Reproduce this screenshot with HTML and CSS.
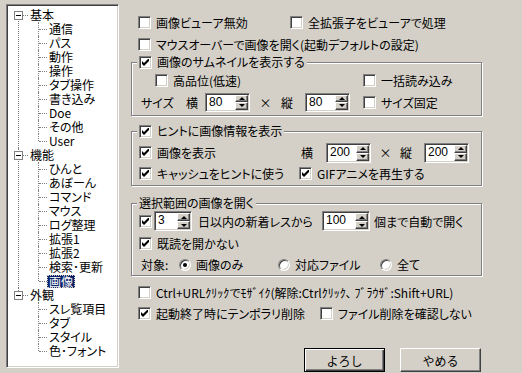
FILE: index.html
```html
<!DOCTYPE html>
<html lang="ja">
<head>
  <meta charset="UTF-8">
  <title>設定 - 画像</title>
  <link rel="stylesheet" href="styles.css">
</head>
<body>

  <div class="dialog">

    <!-- left: category tree -->
    <div class="tree">
      <ul class="root">
        <li class="node">
          <div class="head"><span class="toggle"></span><span class="label">基本</span></div>
          <ul class="kids">
            <li><span class="label">通信</span></li>
            <li><span class="label">パス</span></li>
            <li><span class="label">動作</span></li>
            <li><span class="label">操作</span></li>
            <li><span class="label">タブ操作</span></li>
            <li><span class="label">書き込み</span></li>
            <li><span class="label">Doe</span></li>
            <li><span class="label">その他</span></li>
            <li><span class="label">User</span></li>
          </ul>
        </li>
        <li class="node">
          <div class="head"><span class="toggle"></span><span class="label">機能</span></div>
          <ul class="kids">
            <li><span class="label">ひんと</span></li>
            <li><span class="label">あぼーん</span></li>
            <li><span class="label">コマンド</span></li>
            <li><span class="label">マウス</span></li>
            <li><span class="label">ログ整理</span></li>
            <li><span class="label">拡張1</span></li>
            <li><span class="label">拡張2</span></li>
            <li><span class="label">検索･更新</span></li>
            <li><span class="label selected">画像</span></li>
          </ul>
        </li>
        <li class="node">
          <div class="head"><span class="toggle"></span><span class="label">外観</span></div>
          <ul class="kids">
            <li><span class="label">スレ覧項目</span></li>
            <li><span class="label">タブ</span></li>
            <li><span class="label">スタイル</span></li>
            <li><span class="label">色･フォント</span></li>
          </ul>
        </li>
      </ul>
    </div>

    <!-- right: image settings page -->
    <div class="panel">

      <div class="line">
        <label class="chk viewer-off"><span class="cb"></span><span class="txt">画像ビューア無効</span></label>
        <label class="chk"><span class="cb"></span><span class="txt">全拡張子をビューアで処理</span></label>
      </div>
      <div class="line">
        <label class="chk"><span class="cb"></span><span class="txt">マウスオーバーで画像を開く(起動デフォルトの設定)</span></label>
      </div>

      <div class="group thumb">
        <label class="chk caption"><span class="cb"><svg viewBox="0 0 7 7" width="7" height="7"><path d="M0 2L2 4L7 -1V2L2 7L0 5Z"/></svg></span><span class="txt">画像のサムネイルを表示する</span></label>
        <div class="g-row">
          <label class="chk hq"><span class="cb"></span><span class="txt">高品位(低速)</span></label>
          <label class="chk"><span class="cb"></span><span class="txt">一括読み込み</span></label>
        </div>
        <div class="g-row">
          <span class="size-lbl">サイズ</span>
          <span class="axis-w">横</span>
          <span class="spin"><span class="val">80</span><span class="arrows"><span class="up"></span><span class="dn"></span></span></span>
          <span class="times">×</span>
          <span class="axis-h">縦</span>
          <span class="spin"><span class="val">80</span><span class="arrows"><span class="up"></span><span class="dn"></span></span></span>
          <label class="chk size-fix"><span class="cb"></span><span class="txt">サイズ固定</span></label>
        </div>
      </div>

      <div class="group hint">
        <label class="chk caption"><span class="cb"><svg viewBox="0 0 7 7" width="7" height="7"><path d="M0 2L2 4L7 -1V2L2 7L0 5Z"/></svg></span><span class="txt">ヒントに画像情報を表示</span></label>
        <div class="g-row">
          <label class="chk show-img"><span class="cb"><svg viewBox="0 0 7 7" width="7" height="7"><path d="M0 2L2 4L7 -1V2L2 7L0 5Z"/></svg></span><span class="txt">画像を表示</span></label>
          <span class="axis-w2">横</span>
          <span class="spin narrow"><span class="val">200</span><span class="arrows"><span class="up"></span><span class="dn"></span></span></span>
          <span class="times2">×</span>
          <span class="axis-h">縦</span>
          <span class="spin narrow"><span class="val">200</span><span class="arrows"><span class="up"></span><span class="dn"></span></span></span>
        </div>
        <div class="g-row">
          <label class="chk use-cache"><span class="cb"><svg viewBox="0 0 7 7" width="7" height="7"><path d="M0 2L2 4L7 -1V2L2 7L0 5Z"/></svg></span><span class="txt">キャッシュをヒントに使う</span></label>
          <label class="chk"><span class="cb"><svg viewBox="0 0 7 7" width="7" height="7"><path d="M0 2L2 4L7 -1V2L2 7L0 5Z"/></svg></span><span class="txt">GIFアニメを再生する</span></label>
        </div>
      </div>

      <div class="group range">
        <span class="caption plain">選択範囲の画像を開く</span>
        <div class="g-row">
          <span class="cb"><svg viewBox="0 0 7 7" width="7" height="7"><path d="M0 2L2 4L7 -1V2L2 7L0 5Z"/></svg></span>
          <span class="spin days"><span class="val">3</span><span class="arrows"><span class="up"></span><span class="dn"></span></span></span>
          <span class="days-lbl">日以内の新着レスから</span>
          <span class="spin count"><span class="val">100</span><span class="arrows"><span class="up"></span><span class="dn"></span></span></span>
          <span class="count-lbl">個まで自動で開く</span>
        </div>
        <div class="g-row">
          <label class="chk"><span class="cb"><svg viewBox="0 0 7 7" width="7" height="7"><path d="M0 2L2 4L7 -1V2L2 7L0 5Z"/></svg></span><span class="txt">既読を開かない</span></label>
        </div>
        <div class="g-row short">
          <span class="target-lbl">対象:</span>
          <label class="opt opt-img"><span class="radio on"></span><span class="txt">画像のみ</span></label>
          <label class="opt opt-file"><span class="radio"></span><span class="txt">対応ファイル</span></label>
          <label class="opt"><span class="radio"></span><span class="txt">全て</span></label>
        </div>
      </div>

      <div class="line short mosaic">
        <label class="chk"><span class="cb"></span><span class="txt">Ctrl+URLｸﾘｯｸでﾓｻﾞｲｸ(解除:Ctrlｸﾘｯｸ､ ﾌﾞﾗｳｻﾞ:Shift+URL)</span></label>
      </div>
      <div class="line short">
        <label class="chk temp-del"><span class="cb"><svg viewBox="0 0 7 7" width="7" height="7"><path d="M0 2L2 4L7 -1V2L2 7L0 5Z"/></svg></span><span class="txt">起動終了時にテンポラリ削除</span></label>
        <label class="chk"><span class="cb"></span><span class="txt">ファイル削除を確認しない</span></label>
      </div>

      <div class="button-row">
        <button class="btn default">よろし</button>
        <button class="btn">やめる</button>
      </div>

    </div>
  </div>

</body>
</html>
```

FILE: styles.css
```css
* {
  box-sizing: border-box;
}

body {
  margin: 0;
  width: 522px;
  height: 373px;
  overflow: hidden;
  background: #d4d0c8;
  color: #000;
  font-family: "Noto Sans CJK JP", "Liberation Sans", sans-serif;
  font-size: 12px;
  font-feature-settings: "palt";
}

.dialog {
  display: flex;
  align-items: flex-start;
}

/* ---- tree ---- */
.tree {
  margin: 4px 0 0 6px;
  width: 113px;
  height: 364px;
  background: #fff;
  border: 1px solid;
  border-color: #808080 #fff #fff #808080;
  box-shadow: inset 1px 1px #404040, inset -1px -1px #d4d0c8;
  overflow: hidden;
}
.tree ul {
  list-style: none;
  margin: 0;
  padding: 0;
}
.tree .root {
  padding-top: 3px;
}
.node {
  position: relative;
}
.node::before {
  content: "";
  position: absolute;
  left: 11px;
  top: 0;
  bottom: 0;
  border-left: 1px dotted #808080;
}
.node:first-child::before {
  top: 7px;
}
.node:last-child::before {
  bottom: auto;
  height: 7px;
}
.head {
  position: relative;
  height: 14px;
  padding-left: 23px;
  white-space: nowrap;
}
.head::after {
  content: "";
  position: absolute;
  left: 16px;
  top: 7px;
  width: 5px;
  border-top: 1px dotted #808080;
}
.label {
  display: inline-block;
  height: 14px;
  line-height: 14px;
  vertical-align: top;
}
.toggle {
  position: absolute;
  left: 7px;
  top: 3px;
  width: 9px;
  height: 9px;
  border: 1px solid #808080;
  background: #fff;
  z-index: 1;
}
.toggle::after {
  content: "";
  position: absolute;
  left: 1px;
  top: 3px;
  width: 5px;
  height: 1px;
  background: #000;
}
.kids li {
  position: relative;
  height: 14px;
  padding-left: 42px;
  white-space: nowrap;
}
.kids li::before {
  content: "";
  position: absolute;
  left: 31px;
  top: 0;
  bottom: 0;
  border-left: 1px dotted #808080;
}
.kids li:last-child::before {
  bottom: auto;
  height: 7px;
}
.kids li::after {
  content: "";
  position: absolute;
  left: 32px;
  top: 7px;
  width: 8px;
  border-top: 1px dotted #808080;
}
.label.selected {
  margin-left: -2px;
  margin-top: 1px;
  padding: 0 2px;
  height: 13px;
  line-height: 13px;
  background: #0a246a;
  color: #fff;
  outline: 1px dotted #d4d0c8;
  outline-offset: -1px;
}

/* ---- panel ---- */
.panel {
  margin-left: 12px;
  padding-top: 11px;
  width: 352px;
  display: flex;
  flex-direction: column;
}
.line {
  display: flex;
  align-items: center;
  height: 22px;
  padding-left: 7px;
}
.line.short {
  height: 21px;
}
.mosaic {
  margin-top: 6px;
}

.chk, .opt {
  display: inline-flex;
  align-items: center;
  white-space: nowrap;
  flex: none;
}
.txt {
  margin-left: 5px;
}

.cb {
  display: inline-flex;
  align-items: center;
  justify-content: center;
  flex: none;
  width: 13px;
  height: 13px;
  background: #fff;
  border: 1px solid;
  border-color: #808080 #fff #fff #808080;
  box-shadow: inset 1px 1px #404040, inset -1px -1px #d4d0c8;
}
.cb svg {
  display: block;
  fill: #000;
}

.radio {
  position: relative;
  flex: none;
  width: 12px;
  height: 12px;
  border-radius: 50%;
  background: #fff;
  border: 1px solid;
  border-color: #808080 #fff #fff #808080;
  box-shadow: inset 1px 1px #404040, inset -1px -1px #d4d0c8;
}
.radio.on::after {
  content: "";
  position: absolute;
  left: 3px;
  top: 3px;
  width: 4px;
  height: 4px;
  border-radius: 50%;
  background: #000;
}

/* group frames */
.group {
  position: relative;
  width: 351px;
  border: 1px solid #808080;
  box-shadow: inset 1px 1px #fff, 1px 1px #fff;
  padding: 6px 0 0 7px;
}
.group.thumb {
  margin-top: 7px;
  height: 54px;
}
.group.hint {
  margin-top: 15px;
  height: 55px;
  padding-top: 10px;
}
.group.range {
  margin-top: 17px;
  height: 73px;
}
.caption {
  position: absolute;
  top: -8px;
  left: 5px;
  height: 14px;
  line-height: 14px;
  padding: 0 2px;
  background: #d4d0c8;
}
.g-row {
  display: flex;
  align-items: center;
  height: 22px;
}
.hint .g-row,
.g-row.short {
  height: 21px;
}

/* thumbnail group */
.hq {
  margin-left: 16px;
  width: 208px;
}
.size-lbl {
  margin-left: 2px;
  width: 45px;
}
.axis-w {
  width: 19px;
}
.times {
  width: 31px;
  text-align: center;
}
.axis-h {
  width: 24px;
}
.size-fix {
  margin-left: 13px;
}

/* hint group */
.show-img {
  width: 162px;
}
.axis-w2 {
  width: 25px;
}
.times2 {
  width: 29px;
  text-align: center;
}
.use-cache {
  width: 160px;
}

/* range group */
.range .spin.days {
  margin-left: 2px;
}
.days-lbl {
  margin-left: 6px;
  width: 124px;
}
.count-lbl {
  margin-left: 4px;
}
.target-lbl {
  margin-left: 2px;
  width: 38px;
}
.opt-img {
  width: 99px;
}
.opt-file {
  width: 102px;
}

.viewer-off {
  width: 152px;
}
.temp-del {
  width: 182px;
}

/* up-down edit */
.spin {
  display: inline-flex;
  flex: none;
  width: 45px;
  height: 19px;
  background: #fff;
  border: 1px solid;
  border-color: #808080 #fff #fff #808080;
  box-shadow: inset 1px 1px #404040, inset -1px -1px #d4d0c8;
  padding: 1px;
}
.spin.narrow {
  height: 20px;
}
.spin.days {
  width: 38px;
  height: 20px;
}
.spin.count {
  width: 48px;
  height: 20px;
}
.val {
  flex: 1;
  padding-left: 2px;
  line-height: 15px;
  font-family: "Liberation Sans", sans-serif;
  font-size: 12px;
}
.arrows {
  display: flex;
  flex-direction: column;
  width: 13px;
}
.up, .dn {
  flex: 1;
  display: flex;
  align-items: center;
  justify-content: center;
  background: #d4d0c8;
  border: 1px solid;
  border-color: #fff #404040 #404040 #fff;
  box-shadow: inset -1px -1px #808080;
}
.up::after {
  content: "";
  border-left: 3px solid transparent;
  border-right: 3px solid transparent;
  border-bottom: 3px solid #000;
}
.dn::after {
  content: "";
  border-left: 3px solid transparent;
  border-right: 3px solid transparent;
  border-top: 3px solid #000;
}

/* buttons */
.button-row {
  display: flex;
  justify-content: flex-end;
  gap: 15px;
  margin-top: 24px;
  padding-right: 2px;
}
.btn {
  width: 81px;
  height: 24px;
  padding: 0;
  font-family: inherit;
  font-size: 12px;
  color: #000;
  background: #d4d0c8;
  border: 1px solid;
  border-color: #fff #404040 #404040 #fff;
  box-shadow: inset -1px -1px #808080;
}
.btn.default {
  border: 1px solid #000;
  box-shadow: inset 1px 1px #fff, inset -1px -1px #404040, inset -2px -2px #808080;
}
```
